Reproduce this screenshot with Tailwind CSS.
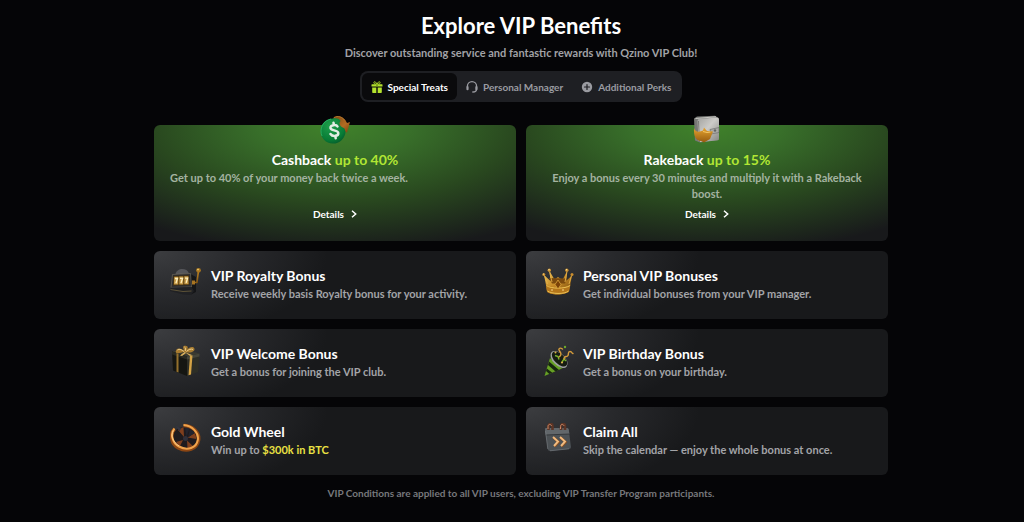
<!DOCTYPE html>
<html lang="en">
<head>
    <meta charset="UTF-8">
    <meta name="viewport" content="width=device-width, initial-scale=1.0">
    <title>Qzino VIP Club</title>
    <script src="https://cdn.jsdelivr.net/npm/@tailwindcss/browser@4"></script>
</head>
<body class="bg-[#050507] min-h-screen pl-[18px] font-['Lato','Open_Sans',sans-serif] font-bold text-white">
    <main class="w-full max-w-[734px] mx-auto pt-3 pb-5">

        <!-- Header -->
        <header class="text-center">
            <h1 class="text-[22px] leading-7">Explore VIP Benefits</h1>
            <p class="mt-[5px] text-[11px] leading-4 text-[#a1a2a6]">Discover outstanding service and fantastic rewards with Qzino VIP Club!</p>
        </header>

        <!-- Tabs -->
        <nav class="mt-[10px] flex justify-center">
            <div class="flex rounded-lg bg-[#1e1f23] p-[2px] text-[10px] leading-4 text-[#9a9ba1]">
                <button class="flex items-center gap-[5px] rounded-md bg-[#0a0a0c] px-[9px] h-[27px] text-white">
                    <svg class="size-3" viewBox="0 0 12 12" fill="#b4e22d">
                        <path d="M1 3.200h10a.5.5 0 0 1 .5.5V5.600H.5V3.700a.5.5 0 0 1 .5-.5zM1.200 6.400h4.100V12H1.900a.7.7 0 0 1-.7-.7zM6.700 6.400h4.100v4.900a.7.7 0 0 1-.7.7H6.700z"/>
                        <path d="M6 3.200C5 .4 2.600 0 2.900 1.900 3 2.900 4.400 3.200 6 3.200zm0 0C7 .4 9.400 0 9.100 1.900 9 2.900 7.600 3.200 6 3.200z" fill="none" stroke="#b4e22d" stroke-width=".9"/>
                        <path d="M5.300 3.200h1.400v2.400H5.300z" fill="#6f9416"/>
                    </svg>
                    Special Treats
                </button>
                <button class="flex items-center gap-[5px] px-[9px] h-[27px]">
                    <svg class="size-3" viewBox="0 0 12 12" fill="none" stroke="#9a9ba1" stroke-width="1.3" stroke-linecap="round">
                        <path d="M1.400 6V5.300a4.600 4.600 0 0 1 9.200 0V8c0 2-1.600 3-3.800 3"/>
                        <path d="M1.500 6.200v2M10.400 6.200v2" stroke-width="2.2"/>
                    </svg>
                    Personal Manager
                </button>
                <button class="flex items-center gap-[5px] px-[9px] h-[27px]">
                    <svg class="size-3" viewBox="0 0 12 12">
                        <circle cx="6" cy="6" r="5.2" fill="#9a9ba1"/>
                        <path d="M6 3.500v5M3.500 6h5" stroke="#1e1f23" stroke-width="1.2" stroke-linecap="round"/>
                    </svg>
                    Additional Perks
                </button>
            </div>
        </nav>

        <!-- Benefits -->
        <section class="mt-[23px] grid grid-cols-2 gap-[10px]">

            <article class="relative flex flex-col items-center rounded-md bg-[#18191b] bg-[radial-gradient(ellipse_84%_110%_at_50%_0%,#40822a_0%,#386f2a_25%,#29481f_60%,#18191b_100%)] px-4 pt-[25px] pb-[19px]">
                <svg class="absolute -top-[10px] left-1/2 size-8 -translate-x-1/2" viewBox="0 0 32 32">
                    <defs>
                        <radialGradient id="coin" cx=".4" cy=".3" r=".8">
                            <stop offset="0" stop-color="#1fa04c"/>
                            <stop offset=".7" stop-color="#087c36"/>
                            <stop offset="1" stop-color="#04542a"/>
                        </radialGradient>
                        <linearGradient id="copper" x1="0" y1="0" x2="1" y2="1">
                            <stop offset="0" stop-color="#7d4614"/>
                            <stop offset=".6" stop-color="#b26c22"/>
                            <stop offset="1" stop-color="#7a3f10"/>
                        </linearGradient>
                    </defs>
                    <path d="M14 3C18-.5 25 1 28 8l3-1-3 10.500-8-2 2.500-2z" fill="url(#copper)"/>
                    <path d="M15 2.500c4-2 8-1 11 3" fill="none" stroke="#c4812f" stroke-width=".8"/>
                    <path d="M14 3.500c4-.8 7 .5 7.500 2.500-2 2.500-1 5 4 7.500l1 3A12.500 12.500 0 1 1 14 3.500z" fill="url(#coin)"/>
                    <path d="M3 21a12.300 12.300 0 0 1 9-17" fill="none" stroke="#38c878" stroke-width=".6"/>
                    <path d="M18.500 11.500c-1-2-7.500-2-7 1.500.4 3 7.500 1.700 7.800 5 .3 3.600-6 3.800-7.800 1M14.500 7.800l.4 2M16.300 20.800l.4 2.500" fill="none" stroke="#e2ede4" stroke-width="2.5" stroke-linecap="round"/>
                </svg>
                <h2 class="text-[14px] leading-5">Cashback <span class="text-[#b1e634]">up to 40%</span></h2>
                <p class="min-h-8 w-full text-[11px] leading-4 text-[#a4b3a1]">Get up to 40% of your money back twice a week.</p>
                <a href="#" class="mt-1 flex items-center gap-[7px] text-[10px] leading-4">
                    Details
                    <svg class="w-[6px] h-2" viewBox="0 0 6 8" fill="none" stroke="#fff" stroke-width="1.5"><path d="M1 .7 4.700 4 1 7.300"/></svg>
                </a>
            </article>

            <article class="relative flex flex-col items-center rounded-md bg-[#18191b] bg-[radial-gradient(ellipse_84%_110%_at_50%_0%,#40822a_0%,#386f2a_25%,#29481f_60%,#18191b_100%)] px-4 pt-[25px] pb-[19px]">
                <svg class="absolute -top-[10px] left-1/2 size-8 -translate-x-1/2" viewBox="0 0 32 32">
                    <defs>
                        <linearGradient id="wallet" x1="0" y1="0" x2="1" y2="1">
                            <stop offset="0" stop-color="#a2a29f"/>
                            <stop offset=".45" stop-color="#cccbc8"/>
                            <stop offset="1" stop-color="#858583"/>
                        </linearGradient>
                        <linearGradient id="arrow" x1="0" y1="0" x2="0" y2="1">
                            <stop offset="0" stop-color="#e8a530"/>
                            <stop offset="1" stop-color="#945a10"/>
                        </linearGradient>
                    </defs>
                    <path d="M3 3.500 6 1.500l18-.8L27.500 3 28 24.500l-19 3-5-2z" fill="#777875"/>
                    <path d="M8 4 26 2.500q2 0 2 2v19q0 2-2 2L9.500 27Q7.500 27 7.500 25L6.500 6q0-2 1.500-2z" fill="url(#wallet)"/>
                    <path d="M4.500 3.500 25 1.800" stroke="#dddcd7" stroke-width=".8"/>
                    <path d="M7.500 6 8.500 27" stroke="#555653" stroke-width=".6"/>
                    <path d="M19 14.500 28 12.500v5l-8 1.500z" fill="#a9a9a6" stroke="#666" stroke-width=".6"/>
                    <circle cx="24" cy="15.500" r="1.2" fill="#666"/>
                    <path d="M3 13c1 4 5 4.500 9 2.500l1-3 3 3.500 6 .5-3 7.500-6 3.500-3-1.500c-5 0-7.500-5-7-13z" fill="url(#arrow)"/>
                    <path d="M12 16.500l4 1 3.500-.5" fill="none" stroke="#ffd474" stroke-width=".8"/>
                </svg>
                <h2 class="text-[14px] leading-5">Rakeback <span class="text-[#b1e634]">up to 15%</span></h2>
                <p class="min-h-8 w-full text-center text-[11px] leading-4 text-[#a4b3a1]">Enjoy a bonus every 30 minutes and multiply it with a Rakeback boost.</p>
                <a href="#" class="mt-1 flex items-center gap-[7px] text-[10px] leading-4">
                    Details
                    <svg class="w-[6px] h-2" viewBox="0 0 6 8" fill="none" stroke="#fff" stroke-width="1.5"><path d="M1 .7 4.700 4 1 7.300"/></svg>
                </a>
            </article>

            <article class="flex gap-[9px] rounded-md bg-[#18191b] bg-[radial-gradient(ellipse_48%_130%_at_0%_0%,#3c3d40_0%,#28292c_50%,#18191b_100%)] p-4">
                <svg class="size-8 shrink-0" viewBox="0 0 32 32">
                    <defs>
                        <linearGradient id="gold" x1="0" y1="0" x2="1" y2="1">
                            <stop offset="0" stop-color="#eec65c"/>
                            <stop offset=".5" stop-color="#c38724"/>
                            <stop offset="1" stop-color="#6b430c"/>
                        </linearGradient>
                    </defs>
                    <path d="M5.500 7.500C6 1 17 0 19 6.500z" fill="#55565a"/>
                    <path d="M20.500 7 26 10V25l-5 2.500z" fill="#141517"/>
                    <path d="M2.500 7.500 20.500 6.500 21.500 20 1 20.500z" fill="#2c2d31" stroke="#77705f" stroke-width=".6"/>
                    <path d="M3.500 9 19 8.300 19.500 18 3 18.500z" fill="#49320c"/>
                    <path d="M4.300 9.800h4v7.700H3.900zM9.300 9.600h4v7.800h-4zM14.300 9.300h4l.3 7.900h-4.300z" fill="#c79b49"/>
                    <path d="M4.900 11.500h2.600l-1.600 4.800M10 11.300h2.600l-1.600 4.800M15 11.100h2.600l-1.500 4.800" fill="none" stroke="#fff0bd" stroke-width="1.3"/>
                    <path d="M1 20.500 21.500 20 24 24l-3 4-8-.5L0 24z" fill="#202124"/>
                    <path d="M.5 22.500 13 24.500l8.500-.5" fill="none" stroke="#77673f" stroke-width=".7"/>
                    <path d="M22.500 15.500h4.500L28.500 4" fill="none" stroke="url(#gold)" stroke-width="1.600"/>
                    <path d="M22 13.500h3v4h-3z" fill="#a87523"/>
                    <circle cx="28.500" cy="3.300" r="2.400" fill="#a8751f"/>
                    <circle cx="28" cy="2.600" r=".8" fill="#f9dc7c"/>
                </svg>
                <div>
                    <h2 class="text-[14px] leading-[18px]">VIP Royalty Bonus</h2>
                    <p class="text-[11px] leading-[18px] text-[#a3a4a8]">Receive weekly basis Royalty bonus for your activity.</p>
                </div>
            </article>

            <article class="flex gap-[9px] rounded-md bg-[#18191b] bg-[radial-gradient(ellipse_48%_130%_at_0%_0%,#3c3d40_0%,#28292c_50%,#18191b_100%)] p-4">
                <svg class="size-8 shrink-0" viewBox="0 0 32 32">
                    <path d="M4 18 2 8l6.500 6L7.500 4l5 8.500L16 10l4.500 3L25 4l-.5 9.500L30 8.500l-3 16c-4 4-19 4-22 0z" fill="url(#gold)"/>
                    <path d="M7 11l3 5.500h13l2-5" fill="#7b4a0e"/>
                    <path d="M4 17.500c4 3.500 20 3.500 24.500 0L27 24.500c-4 4-19 4-22 0z" fill="#b4761b"/>
                    <path d="M4.500 18.500c4 3.500 19 3.500 23.500 0M5.500 24c4 3 17 3.500 21 0" fill="none" stroke="#eac156" stroke-width="1"/>
                    <path d="M2.500 8.500 5.500 17M7.500 4.500 10 15M25 4.500 23 15M29.500 8.500 27 17" fill="none" stroke="#e3b04a" stroke-width=".9"/>
                    <path d="M16 13l3 4.500-3 4.500-3-4.500z" fill="#7a4208" stroke="#dca63c" stroke-width=".8"/>
                    <g fill="#c98d2e">
                        <circle cx="1.800" cy="7.500" r="1.500"/><circle cx="7.300" cy="3.200" r="1.700"/>
                        <circle cx="24.800" cy="3.200" r="1.700"/><circle cx="30" cy="7.500" r="1.500"/>
                    </g>
                    <g fill="#ffe69a">
                        <circle cx="1.500" cy="7" r=".6"/><circle cx="7" cy="2.700" r=".7"/>
                        <circle cx="24.500" cy="2.700" r=".7"/><circle cx="10" cy="23" r=".8"/><circle cx="21" cy="23" r=".8"/>
                    </g>
                </svg>
                <div>
                    <h2 class="text-[14px] leading-[18px]">Personal VIP Bonuses</h2>
                    <p class="text-[11px] leading-[18px] text-[#a3a4a8]">Get individual bonuses from your VIP manager.</p>
                </div>
            </article>

            <article class="flex gap-[9px] rounded-md bg-[#18191b] bg-[radial-gradient(ellipse_48%_130%_at_0%_0%,#3c3d40_0%,#28292c_50%,#18191b_100%)] p-4">
                <svg class="size-8 shrink-0" viewBox="0 0 32 32">
                    <path d="M2 6.500 14 4.500l15.500 4L17 12z" fill="#3a3a30"/>
                    <path d="M2 6.500 17 11.500V31L3 25.500z" fill="#151612"/>
                    <path d="M17 11.500 29.500 8.500 28 27 17 31z" fill="#2d2e26"/>
                    <path d="M2 6.500 17 11.500V14.500L2 9.500z" fill="#2a2b23"/>
                    <path d="M17 11.500l12.500-3v3L17 14.500z" fill="#45453a"/>
                    <path d="M6.500 8l2 .7V27.500l-2-.8z" fill="#94702c"/>
                    <path d="M20 10.800l2.500-.6-1.500 19.300-2.500.8z" fill="#d4a345"/>
                    <path d="M13.500 7C8 9 4 8.500 6.500 4.500 8 2.500 12 3.500 14.500 6 12 2 13 0 16.500 1c2 .8 1.500 3-.5 5 3-4.500 8-5 8.500-2 .3 3-5 4-8.500 3.500z" fill="#a87c30"/>
                    <path d="M7.500 5c2-1.500 4.500 0 6.500 1.500M14.500 2c1.500.8 1 2.500.7 4M16.500 6.500c2-2 4.500-3 6.500-2" fill="none" stroke="#f3d898" stroke-width=".9"/>
                    <path d="M14.500 7l-4.500 3.500 2 .6L16 8l4 3 2-1z" fill="#d9b05c"/>
                </svg>
                <div>
                    <h2 class="text-[14px] leading-[18px]">VIP Welcome Bonus</h2>
                    <p class="text-[11px] leading-[18px] text-[#a3a4a8]">Get a bonus for joining the VIP club.</p>
                </div>
            </article>

            <article class="flex gap-[9px] rounded-md bg-[#18191b] bg-[radial-gradient(ellipse_48%_130%_at_0%_0%,#3c3d40_0%,#28292c_50%,#18191b_100%)] p-4">
                <svg class="size-8 shrink-0" viewBox="0 0 32 32">
                    <path d="M9.500 8 2.500 31 23.500 22z" fill="#66a024"/>
                    <path d="M9 9.500l14.500 12.500-3.500 1.500L8 13zM7 16.500l10 8.500-3.500 1.500L6 20zM4.800 23.500l5.500 4.200-3 1.300L4 26z" fill="#182610"/>
                    <ellipse cx="17" cy="14.500" rx="10.500" ry="6" transform="rotate(44 17 14.500)" fill="#9fa1a2"/>
                    <ellipse cx="17.500" cy="14" rx="9.500" ry="5" transform="rotate(44 17.500 14)" fill="#161d12"/>
                    <path d="M13 10.500l3 1 1 3M20 17l2-3 2 2" fill="none" stroke="#75b52b" stroke-width="1.4"/>
                    <path d="M17 12c3-2 2-4 .5-6s0-4 3-2M22 14c0-4 3-1.500 4-3.500s-.5-4 2-4 1.500 2.500 3 2" fill="none" stroke="#d49c3b" stroke-width="1.4" stroke-linecap="round"/>
                    <circle cx="23" cy="2" r="1.2" fill="#6ea82a"/><circle cx="13.500" cy="7.500" r="1" fill="#d8b04b"/>
                    <circle cx="20" cy="17.500" r="1.1" fill="#dbaf47"/>
                </svg>
                <div>
                    <h2 class="text-[14px] leading-[18px]">VIP Birthday Bonus</h2>
                    <p class="text-[11px] leading-[18px] text-[#a3a4a8]">Get a bonus on your birthday.</p>
                </div>
            </article>

            <article class="flex gap-[9px] rounded-md bg-[#18191b] bg-[radial-gradient(ellipse_48%_130%_at_0%_0%,#3c3d40_0%,#28292c_50%,#18191b_100%)] p-4">
                <svg class="size-8 shrink-0" viewBox="0 0 32 32">
                    <ellipse cx="15" cy="15.500" rx="12.500" ry="11" transform="rotate(25 15 15.500)" fill="#1f1b1e"/>
                    <path d="M14 14 8 7l5.500-3zM17.500 14.500l7.500-4.500 1.500 6zM17 17.500l6.500 6-6 2zM13 17l-3.500 7-3.500-5z" fill="#7f3f1d"/>
                    <path d="M15 4l4.500 1-3 9zM20 6l5 3.500-7 5z" fill="#22232d"/>
                    <path d="M4.500 6C-.5 11 1 21 8.500 25c8.500 4.500 18.500 1 20-7.500C30 9.500 22.500 2.500 13.500 2.500" fill="none" stroke="#8c4613" stroke-width="3.500"/>
                    <path d="M4.500 5.500C0 10.500 2 20 9 23.500 17.500 28 26.500 25 27.800 17 29 9.500 22 2.500 13.500 2" fill="none" stroke="#f0a34c" stroke-width="2"/>
                    <path d="M3.500 7.500C0 12 3 19.500 9 22.800" fill="none" stroke="#ffd49a" stroke-width=".8"/>
                    <circle cx="15.500" cy="15.500" r="2.500" fill="#30303a"/>
                    <path d="M5.500 2.500l5.500 3-1.500 3z" fill="#343540"/>
                </svg>
                <div>
                    <h2 class="text-[14px] leading-[18px]">Gold Wheel</h2>
                    <p class="text-[11px] leading-[18px] text-[#a3a4a8]">Win up to <span class="text-[#e9e043]">$300k in BTC</span></p>
                </div>
            </article>

            <article class="flex gap-[9px] rounded-md bg-[#18191b] bg-[radial-gradient(ellipse_48%_130%_at_0%_0%,#3c3d40_0%,#28292c_50%,#18191b_100%)] p-4">
                <svg class="size-8 shrink-0" viewBox="0 0 32 32">
                    <path d="M4 5 25 5q1.500 0 1.700 1.500L29 24q0 2-2 2L8 28q-2 0-2.300-2L3 7q0-2 1-2z" fill="#4c5155"/>
                    <path d="M4 5 25 5q1.500 0 1.700 1.500l.7 4.500L3.800 12 3 7q0-2 1-2z" fill="#62676b"/>
                    <path d="M4 12l23.500-1" stroke="#2c2f32" stroke-width=".8"/>
                    <path d="M5.800 26 3.500 8M8 27.800 27 25.800" fill="none" stroke="#7b8084" stroke-width=".6"/>
                    <path d="M6.500 7V3.500c0-3.500 4-3.500 4 0V7M19 7V3.500c0-3.500 4-3.500 4 0V7" fill="none" stroke="#5d3526" stroke-width="2.6"/>
                    <path d="M6 6V3.500C6 .8 9 .8 9.500 3M18.500 6V3.500c0-2.700 3-2.700 3.500-.5" fill="none" stroke="#c98765" stroke-width="1"/>
                    <path d="M11.500 14.500l5 4.500-4 4.500M18.500 14.500l5 4.500-4 4.500" fill="none" stroke="#8a4f20" stroke-width="2.6"/>
                    <path d="M11 14l5 4.500-4 4.500M18 14l5 4.500-4 4.500" fill="none" stroke="#f0bb80" stroke-width="1.9"/>
                </svg>
                <div>
                    <h2 class="text-[14px] leading-[18px]">Claim All</h2>
                    <p class="text-[11px] leading-[18px] text-[#a3a4a8]">Skip the calendar — enjoy the whole bonus at once.</p>
                </div>
            </article>
        </section>

        <p class="mt-[10px] text-center text-[10px] leading-4 text-[#77787c]">VIP Conditions are applied to all VIP users, excluding VIP Transfer Program participants.</p>
    </main>
</body>
</html>
